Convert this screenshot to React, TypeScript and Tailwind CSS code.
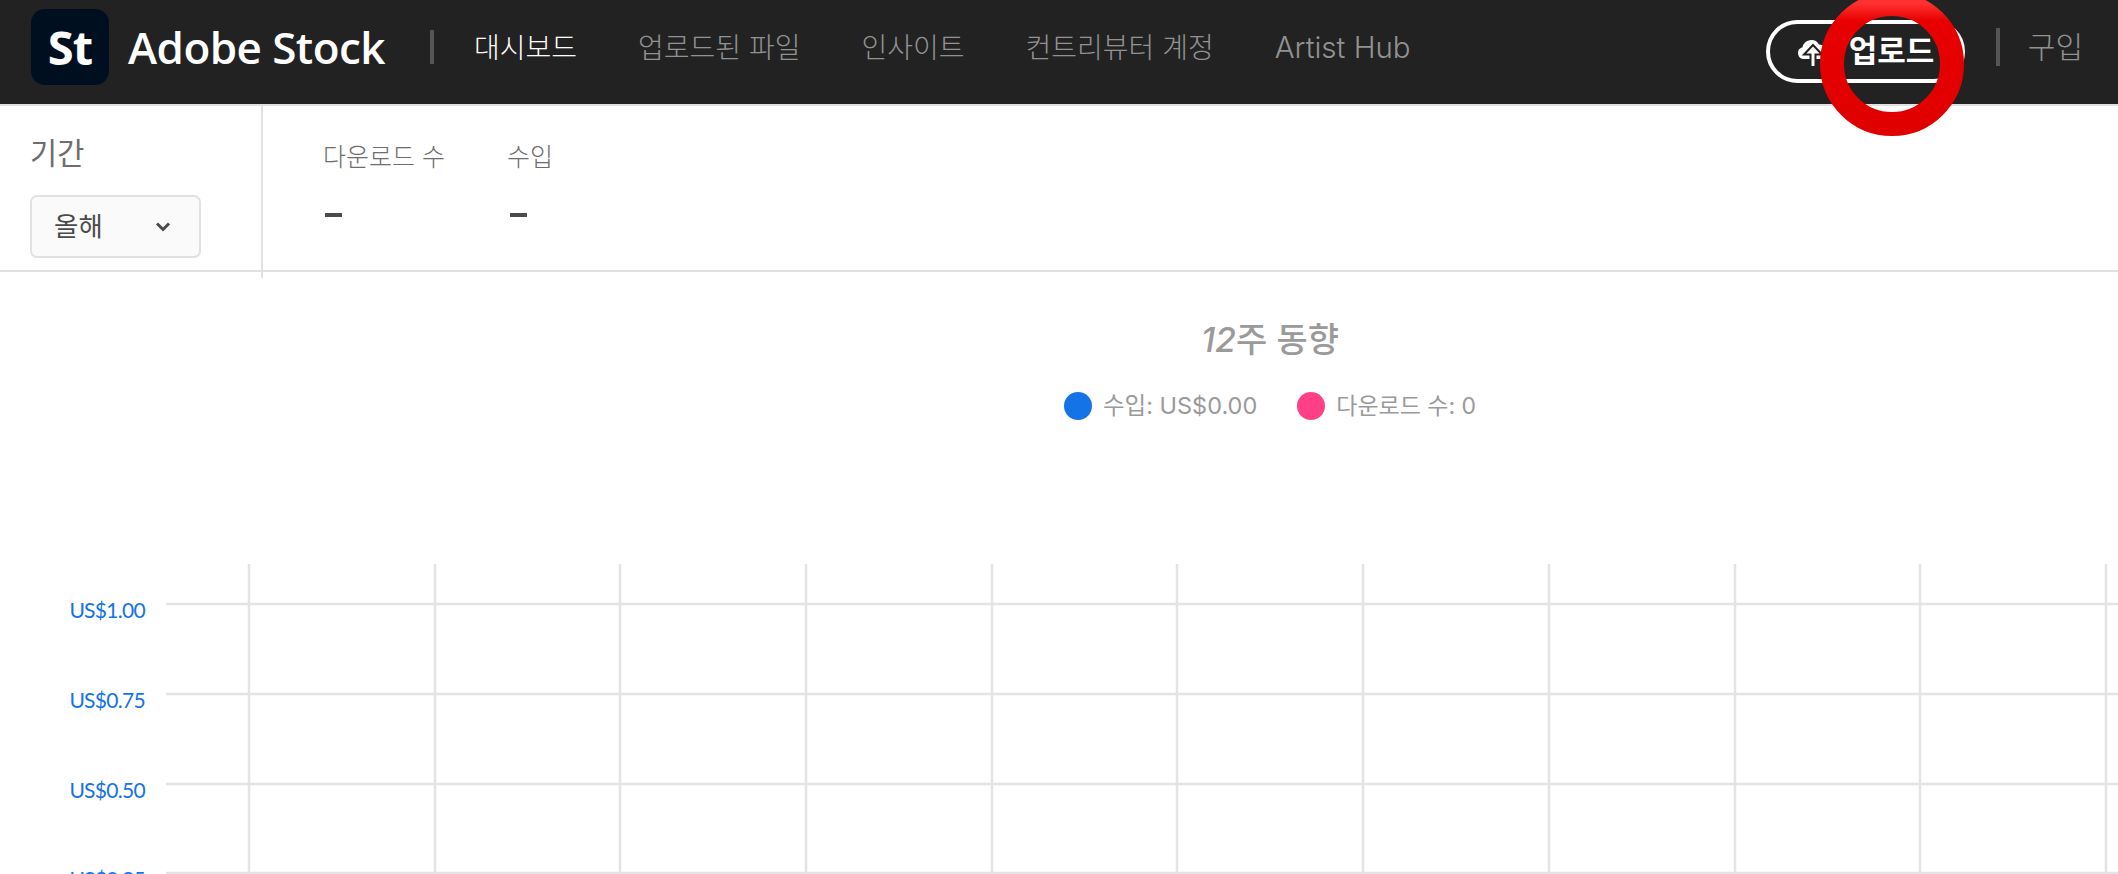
const KR = "font-['Inter','Noto_Sans_CJK_KR',sans-serif]";

function Logo() {
  return (
    <div className="flex h-[76px] w-[78px] items-center justify-center rounded-[14px] bg-[#000f20]">
      <span className="text-[47px] leading-none font-bold tracking-[-1px] text-white font-['Open_Sans',sans-serif]">St</span>
    </div>
  );
}

function CloudUpload() {
  return (
    <svg width="32" height="30" viewBox="0 0 32 30" fill="none" className="shrink-0">
      <path d="M7 22a6 6 0 0 1-1.5-11.8A9 9 0 0 1 22 7.5 7.5 7.5 0 0 1 25 22z" fill="#fff" />
      <path d="M16 8L7 17.5h6.5V30h5V17.5H25z" fill="#fff" stroke="#222222" strokeWidth="2" />
    </svg>
  );
}

function Ring() {
  return (
    <svg className="pointer-events-none absolute left-[1818px] top-[-10px]" width="148" height="148" viewBox="0 0 148 148">
      <defs>
        <linearGradient id="ring" x1="0" y1="0" x2="0" y2="1">
          <stop offset="0" stopColor="#ff3030" />
          <stop offset="0.14" stopColor="#e80000" />
          <stop offset="1" stopColor="#e00000" />
        </linearGradient>
      </defs>
      <circle cx="74" cy="74" r="60" fill="none" stroke="url(#ring)" strokeWidth="24" />
    </svg>
  );
}

function Chart() {
  const xs = [249, 435, 620, 806, 992, 1177, 1363, 1549, 1735, 1920, 2106];
  const ys = [
    { y: 604, t: "US$1.00" },
    { y: 694, t: "US$0.75" },
    { y: 784, t: "US$0.50" },
    { y: 873, t: "US$0.25" },
  ];
  return (
    <svg width="2118" height="310" viewBox="0 564 2118 310" className="block">
      {xs.map((x) => (
        <line key={x} x1={x} x2={x} y1="564" y2="874" stroke="#e4e4e4" strokeWidth="2.5" />
      ))}
      {ys.map(({ y, t }) => (
        <g key={t}>
          <line x1="166" x2="2118" y1={y} y2={y} stroke="#e4e4e4" strokeWidth="2.5" />
          <text x="145" y={y + 14} textAnchor="end" fill="#1473e6" fontSize="21" letterSpacing="-0.7" fontFamily="'Lato', sans-serif">{t}</text>
        </g>
      ))}
    </svg>
  );
}

export default function App() {
  const nav = ["업로드된 파일", "인사이트", "컨트리뷰터 계정"];
  return (
    <div className={`relative h-[874px] w-[2118px] overflow-hidden bg-white ${KR}`}>
      <header className="flex h-[106px] items-center border-b-2 border-[#e1e1e1] bg-[#222222] pb-[10px] pl-[31px] pr-[35px]">
        <Logo />
        <span className="ml-[19px] text-[44px] leading-none font-semibold tracking-[-0.55px] text-white font-['Open_Sans',sans-serif]">Adobe Stock</span>
        <div className="ml-[45px] h-[34px] w-[4px] bg-[#555555]" />
        <nav className="ml-[40px] mt-[1px] flex items-center gap-[61px] text-[28px] font-light text-[#929292]">
          <span className="text-white">대시보드</span>
          {nav.map((n) => (
            <span key={n}>{n}</span>
          ))}
          <span className="text-[29.5px]">Artist Hub</span>
        </nav>
        <div className="ml-auto mt-[9px] flex h-[63px] w-[199px] items-center rounded-full border-4 border-white pl-[27px]">
          <CloudUpload />
          <span className="ml-[20px] text-[31px] font-bold text-white">업로드</span>
        </div>
        <div className="ml-[31px] h-[38px] w-[4px] bg-[#555555]" />
        <span className="ml-[28px] text-[30px] font-light text-[#929292]">구입</span>
      </header>

      <section className="flex h-[166px] border-b-2 border-[#e1e1e1]">
        <div className="w-[261px] shrink-0 pl-[30px] pt-[29px]">
          <div className="text-[29.5px] leading-[36px] text-[#6e6e6e]">기간</div>
          <div className="mt-[24px] flex h-[63px] w-[171px] items-center justify-between rounded-[7px] border-2 border-[#e1e1e1] bg-[#fafafa] pl-[22px] pr-[28px]">
            <span className="text-[26.5px] text-[#4b4b4b]">올해</span>
            <svg width="16" height="12" viewBox="0 0 16 12" fill="none">
              <path d="M2 2.5l6 6 6-6" stroke="#4b4b4b" strokeWidth="3" />
            </svg>
          </div>
        </div>
        <div className="h-[172px] w-[2px] shrink-0 bg-[#e1e1e1]" />
        <div className="flex gap-[62px] pl-[60px] pt-[34px] text-[#6e6e6e]">
          <div>
            <div className="text-[25px] leading-[34px] font-light">다운로드 수</div>
            <div className="mt-[39px] ml-[2px] h-[4px] w-[17px] bg-[#4b4b4b]" />
          </div>
          <div>
            <div className="text-[25px] leading-[34px] font-light">수입</div>
            <div className="mt-[39px] ml-[3px] h-[4px] w-[17px] bg-[#4b4b4b]" />
          </div>
        </div>
      </section>

      <section className="pt-[45px] text-[#9a9a9a]">
        <div className="flex flex-col items-center pl-[422px]">
          <div className="text-[34px] leading-[46px] font-medium"><span className="italic">12</span>주 동향</div>
          <div className="mt-[27px] flex items-center gap-[40px] text-[23.5px] leading-[32px]">
            <div className="flex items-center gap-[11px]">
              <span className="h-[28px] w-[28px] rounded-full bg-[#1473e6]" />
              <span>수입: US$0.00</span>
            </div>
            <div className="flex items-center gap-[11px]">
              <span className="h-[28px] w-[28px] rounded-full bg-[#ff4085]" />
              <span className="text-[23px]">다운로드 수: 0</span>
            </div>
          </div>
        </div>
        <div className="mt-[142px] w-full">
          <Chart />
        </div>
      </section>

      <Ring />
    </div>
  );
}
